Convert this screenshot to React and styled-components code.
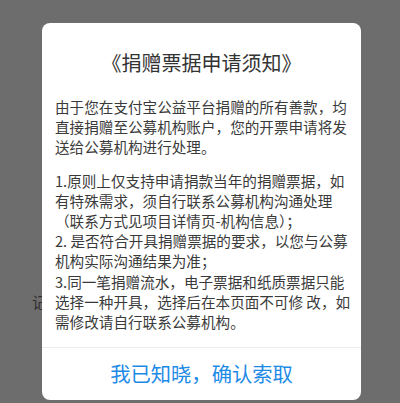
import React from "react";
import styled, { createGlobalStyle } from "styled-components";

const GlobalStyle = createGlobalStyle`
  html, body {
    margin: 0;
    padding: 0;
    background: #6d6d6d;
  }
  body {
    font-family: "Noto Sans CJK SC", "Noto Sans", sans-serif;
  }
`;

const Page = styled.div`
  position: relative;
  width: 400px;
  height: 403px;
  overflow: hidden;
  background: #6d6d6d;
`;

const BehindText = styled.div`
  padding: 292px 0 0 32px;
  font-size: 15px;
  line-height: 20px;
  color: #2f2f2f;
`;

const Overlay = styled.div`
  position: absolute;
  inset: 0;
  display: flex;
  justify-content: center;
  padding-top: 23px;
`;

const Dialog = styled.div`
  width: 319px;
  height: 377px;
  margin-left: 3px;
  background: #ffffff;
  border-radius: 8px;
  display: flex;
  flex-direction: column;
  overflow: hidden;
`;

const Title = styled.h2`
  margin: 0;
  padding-top: 26px;
  font-size: 20px;
  line-height: 28px;
  font-weight: 400;
  text-align: center;
  color: #333333;
`;

const Body = styled.div`
  padding: 20px 9px 15px 13px;
  color: #3a3a3a;
  font-size: 14.6px;
  line-height: 20.2px;
`;

const Paragraph = styled.p`
  margin: 0 0 ${(p) => p.gap || 0}px;
`;

const Footer = styled.button`
  flex: 1;
  border: none;
  border-top: 1px solid #ececec;
  background: transparent;
  font-family: inherit;
  font-size: 20.3px;
  color: #1d8ae6;
  padding: 0 0 3px;
  cursor: pointer;
`;

export default function App() {
  return (
    <>
      <GlobalStyle />
      <Page>
        <BehindText>记</BehindText>
        <Overlay>
          <Dialog>
            <Title>《捐赠票据申请须知》</Title>
            <Body>
              <Paragraph gap={13}>
                由于您在支付宝公益平台捐赠的所有善款，均直接捐赠至公募机构账户，您的开票申请将发送给公募机构进行处理。
              </Paragraph>
              <Paragraph>
                1.原则上仅支持申请捐款当年的捐赠票据，如有特殊需求，须自行联系公募机构沟通处理（联系方式见项目详情页-机构信息）；
              </Paragraph>
              <Paragraph>2. 是否符合开具捐赠票据的要求，以您与公募机构实际沟通结果为准；</Paragraph>
              <Paragraph>
                3.同一笔捐赠流水，电子票据和纸质票据只能选择一种开具，选择后在本页面不可修 改，如需修改请自行联系公募机构。
              </Paragraph>
            </Body>
            <Footer>我已知晓，确认索取</Footer>
          </Dialog>
        </Overlay>
      </Page>
    </>
  );
}
